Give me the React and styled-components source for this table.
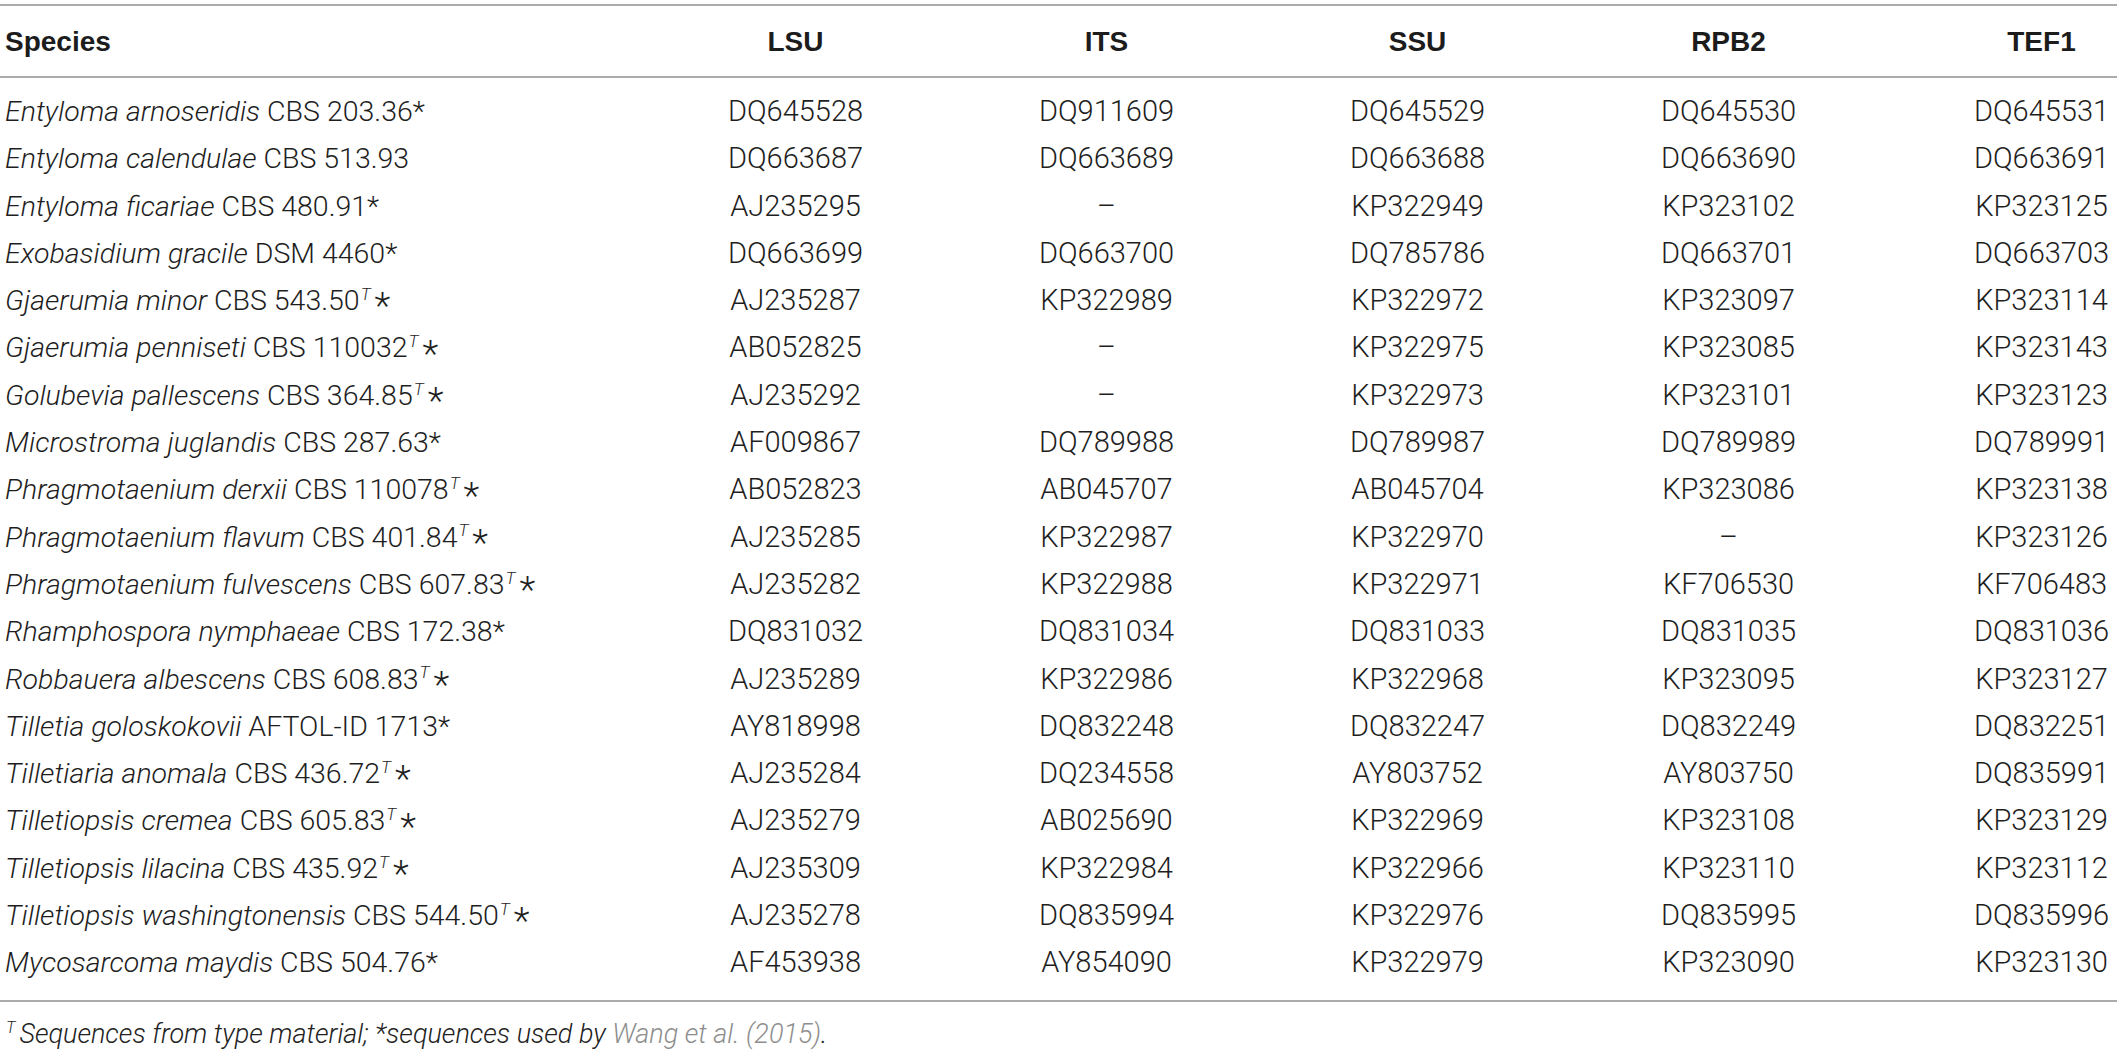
import React from 'react'
import styled, { createGlobalStyle } from 'styled-components'

const GlobalStyle = createGlobalStyle`
  html, body {
    margin: 0;
    padding: 0;
    background: #ffffff;
    overflow: hidden;
  }
  body {
    font-family: Roboto, "Liberation Sans", Arial, sans-serif;
    color: #222222;
  }
`

const rows = [
  ['Entyloma arnoseridis', 'CBS 203.36', false, 'DQ645528', 'DQ911609', 'DQ645529', 'DQ645530', 'DQ645531'],
  ['Entyloma calendulae', 'CBS 513.93', null, 'DQ663687', 'DQ663689', 'DQ663688', 'DQ663690', 'DQ663691'],
  ['Entyloma ficariae', 'CBS 480.91', false, 'AJ235295', '–', 'KP322949', 'KP323102', 'KP323125'],
  ['Exobasidium gracile', 'DSM 4460', false, 'DQ663699', 'DQ663700', 'DQ785786', 'DQ663701', 'DQ663703'],
  ['Gjaerumia minor', 'CBS 543.50', true, 'AJ235287', 'KP322989', 'KP322972', 'KP323097', 'KP323114'],
  ['Gjaerumia penniseti', 'CBS 110032', true, 'AB052825', '–', 'KP322975', 'KP323085', 'KP323143'],
  ['Golubevia pallescens', 'CBS 364.85', true, 'AJ235292', '–', 'KP322973', 'KP323101', 'KP323123'],
  ['Microstroma juglandis', 'CBS 287.63', false, 'AF009867', 'DQ789988', 'DQ789987', 'DQ789989', 'DQ789991'],
  ['Phragmotaenium derxii', 'CBS 110078', true, 'AB052823', 'AB045707', 'AB045704', 'KP323086', 'KP323138'],
  ['Phragmotaenium flavum', 'CBS 401.84', true, 'AJ235285', 'KP322987', 'KP322970', '–', 'KP323126'],
  ['Phragmotaenium fulvescens', 'CBS 607.83', true, 'AJ235282', 'KP322988', 'KP322971', 'KF706530', 'KF706483'],
  ['Rhamphospora nymphaeae', 'CBS 172.38', false, 'DQ831032', 'DQ831034', 'DQ831033', 'DQ831035', 'DQ831036'],
  ['Robbauera albescens', 'CBS 608.83', true, 'AJ235289', 'KP322986', 'KP322968', 'KP323095', 'KP323127'],
  ['Tilletia goloskokovii', 'AFTOL-ID 1713', false, 'AY818998', 'DQ832248', 'DQ832247', 'DQ832249', 'DQ832251'],
  ['Tilletiaria anomala', 'CBS 436.72', true, 'AJ235284', 'DQ234558', 'AY803752', 'AY803750', 'DQ835991'],
  ['Tilletiopsis cremea', 'CBS 605.83', true, 'AJ235279', 'AB025690', 'KP322969', 'KP323108', 'KP323129'],
  ['Tilletiopsis lilacina', 'CBS 435.92', true, 'AJ235309', 'KP322984', 'KP322966', 'KP323110', 'KP323112'],
  ['Tilletiopsis washingtonensis', 'CBS 544.50', true, 'AJ235278', 'DQ835994', 'KP322976', 'DQ835995', 'DQ835996'],
  ['Mycosarcoma maydis', 'CBS 504.76', false, 'AF453938', 'AY854090', 'KP322979', 'KP323090', 'KP323130']
]

const columns = ['LSU', 'ITS', 'SSU', 'RPB2', 'TEF1']

const Page = styled.div`
  padding-top: 4px;
  width: 2117px;
`

const Table = styled.table`
  width: 100%;
  border-collapse: collapse;
  table-layout: fixed;
  border-top: 2px solid #ababab;
  border-bottom: 2px solid #ababab;
`

const HeadCell = styled.th`
  height: 68px;
  padding: 2px 0 0;
  padding-left: ${props => (props.last ? '82px' : '0')};
  font-family: "Liberation Sans", Arial, sans-serif;
  font-size: 28px;
  font-weight: 700;
  color: #1c1c1c;
  text-align: ${props => (props.first ? 'left' : 'center')};
  text-indent: ${props => (props.first ? '5px' : '0')};
  border-bottom: 2px solid #ababab;
  vertical-align: middle;
`

const Cell = styled.td`
  padding: 0;
  padding-left: ${props => (props.last ? '82px' : '0')};
  padding-top: ${props => (props.firstRow ? '10px' : '0')};
  padding-bottom: ${props => (props.lastRow ? '13px' : '0')};
  font-size: ${props => (props.first ? '28.5px' : '29px')};
  font-weight: 300;
  line-height: 47.3px;
  color: #1e1e1e;
  text-align: ${props => (props.first ? 'left' : 'center')};
  white-space: nowrap;
  vertical-align: top;
`

const SpeciesText = styled.span`
  padding-left: 5px;
`

const Genus = styled.i`
  font-style: italic;
`

const TypeMark = styled.sup`
  font-style: italic;
  font-size: 60%;
  line-height: 0;
  vertical-align: 0.6em;
  margin-left: 1px;
  margin-right: 4px;
`

const Star = styled.span`
  display: inline-block;
  font-size: 1.3em;
  line-height: 0;
  vertical-align: -0.22em;
`

const Footnote = styled.p`
  margin: 14px 0 0;
  padding-left: 5px;
  font-size: 27px;
  font-weight: 300;
  line-height: 36px;
  font-style: italic;
  color: #222222;
`

const Ref = styled.span`
  color: #8e8e8e;
`

const App = () => (
  <Page>
    <GlobalStyle />
    <Table>
      <colgroup>
        <col style={{ width: 640 }} />
        <col style={{ width: 311 }} />
        <col style={{ width: 311 }} />
        <col style={{ width: 311 }} />
        <col style={{ width: 311 }} />
        <col />
      </colgroup>
      <thead>
        <tr>
          <HeadCell first>Species</HeadCell>
          {columns.map((c, i) => (
            <HeadCell key={c} last={i === columns.length - 1}>{c}</HeadCell>
          ))}
        </tr>
      </thead>
      <tbody>
        {rows.map(([name, strain, isType, ...seqs], r) => {
          const firstRow = r === 0
          const lastRow = r === rows.length - 1
          return (
            <tr key={name}>
              <Cell first firstRow={firstRow} lastRow={lastRow}>
                <SpeciesText>
                  <Genus>{name}</Genus> {strain}
                  {isType === true && <><TypeMark>T</TypeMark><Star>*</Star></>}
                  {isType === false && '*'}
                </SpeciesText>
              </Cell>
              {seqs.map((s, i) => (
                <Cell
                  key={i}
                  last={i === seqs.length - 1}
                  firstRow={firstRow}
                  lastRow={lastRow}
                >
                  {s}
                </Cell>
              ))}
            </tr>
          )
        })}
      </tbody>
    </Table>
    <Footnote>
      <TypeMark>T</TypeMark>Sequences from type material; *sequences used by{' '}
      <Ref>Wang et al. (2015)</Ref>.
    </Footnote>
  </Page>
)

export default App
